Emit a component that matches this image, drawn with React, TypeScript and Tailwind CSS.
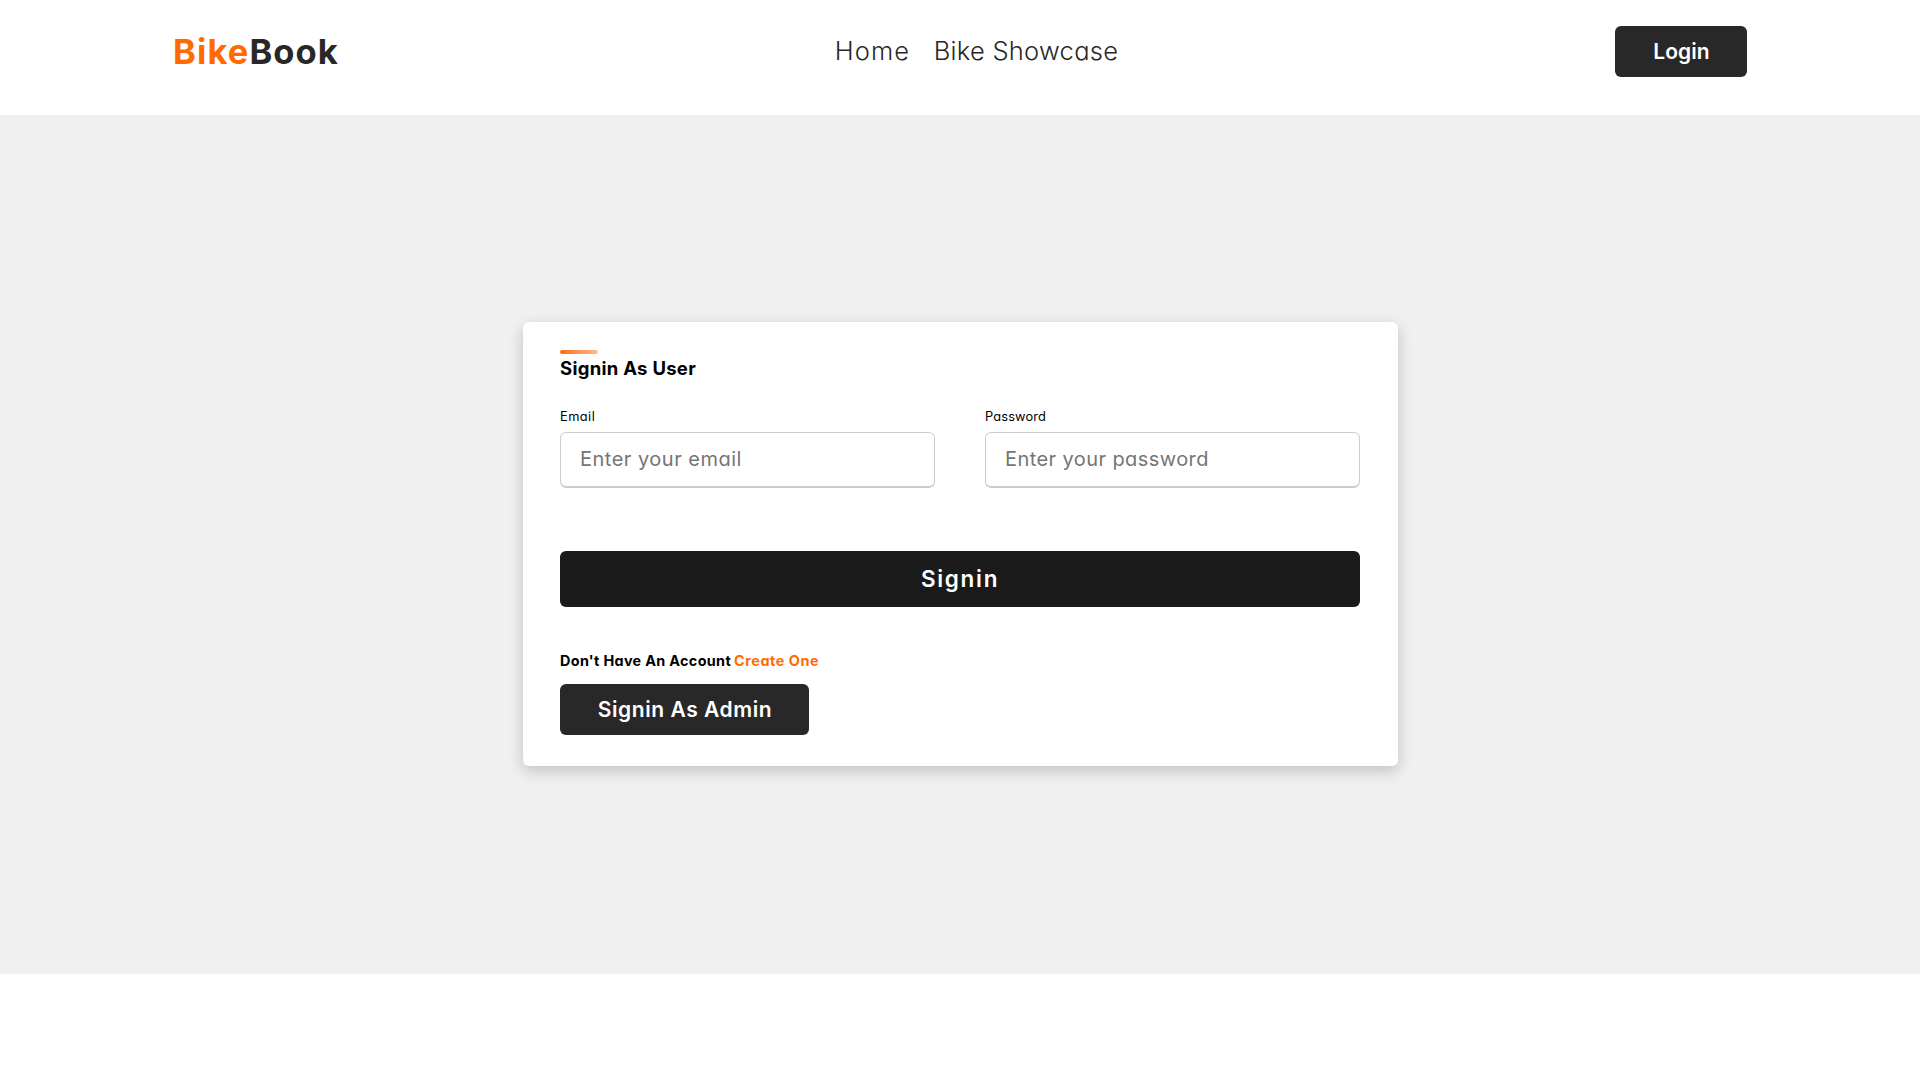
type FieldProps = {
  id: string;
  label: string;
  type: string;
  placeholder: string;
  labelClass: string;
  inputClass: string;
};

function Field({ id, label, type, placeholder, labelClass, inputClass }: FieldProps) {
  return (
    <div className="flex w-[375px] flex-col">
      <label htmlFor={id} className={`mb-[5px] h-5 text-[12.8px] leading-5 text-black ${labelClass}`}>
        {label}
      </label>
      <input
        id={id}
        type={type}
        placeholder={placeholder}
        className={`h-14 w-full rounded-[6px] border border-b-2 border-[#ccc] bg-white px-[19px] pb-px text-xl outline-none placeholder:text-[#757575] ${inputClass}`}
      />
    </div>
  );
}

function Header() {
  return (
    <header className="flex h-[115px] items-start justify-between bg-white pt-[26px] pr-[173px] pl-[173px]">
      <div className="flex h-[51px] w-[180px] items-center pt-px text-[34.5px] leading-[36px] font-bold tracking-[1.1px]">
        <span className="text-[#ff6b00]">Bike</span>
        <span className="text-[#282828]">Book</span>
      </div>
      <nav className="-ml-[15px] flex h-[51px] items-center gap-[23.5px] pb-px text-[25.5px] leading-[26px] font-[340] text-[#282828]">
        <a href="#home" className="tracking-[1.1px]">Home</a>
        <a href="#showcase" className="tracking-[0.28px]">Bike Showcase</a>
      </nav>
      <button className="h-[51px] w-[132px] rounded-[6px] bg-[#282828] pl-px text-[21px] leading-none font-semibold tracking-[0.1px] text-white">
        Login
      </button>
    </header>
  );
}

function SigninCard() {
  return (
    <section className="h-[444px] w-[875px] rounded-[6px] bg-white pr-[38px] pl-[37px] pt-7 shadow-[0_5px_15px_rgba(0,0,0,0.2)]">
      <div className="h-1 w-[38px] rounded-[3px] bg-linear-to-r from-[#ff6b00] to-[#ffb98a]" />
      <h3 className="mt-[4px] h-5 text-[18.5px] leading-5 font-bold tracking-[0.28px] text-black">Signin As User</h3>

      <div className="mt-[29px] flex justify-between">
        <Field
          id="email"
          label="Email"
          type="email"
          placeholder="Enter your email"
          labelClass="tracking-[0.45px]"
          inputClass="tracking-[0.5px]"
        />
        <Field
          id="password"
          label="Password"
          type="password"
          placeholder="Enter your password"
          labelClass="tracking-[0.15px]"
          inputClass="tracking-[0.42px]"
        />
      </div>

      <button className="mt-[63px] block h-14 w-full rounded-[6px] bg-[#1a1a1a] text-[22.5px] leading-none font-semibold tracking-[1.7px] text-white">
        Signin
      </button>

      <p className="mt-11 h-5 text-[14.4px] leading-5 font-bold whitespace-nowrap text-black">
        <span className="tracking-[0.33px]">Don't Have An Account</span>
        <a href="#register" className="ml-[3px] tracking-[0.55px] text-[#ff6b00]">Create One</a>
      </p>

      <button className="mt-[13px] block h-[51px] w-[249px] rounded-[6px] bg-[#282828] pl-px text-[21px] leading-none font-semibold tracking-[0.56px] text-white">
        Signin As Admin
      </button>
    </section>
  );
}

export default function App() {
  return (
    <div className="min-h-screen bg-white [font-family:Inter,sans-serif] [font-feature-settings:'cv11','ss03']">
      <Header />
      <main className="flex h-[859px] items-center justify-center bg-[#f0f0f0] pb-px pl-px">
        <SigninCard />
      </main>
    </div>
  );
}
